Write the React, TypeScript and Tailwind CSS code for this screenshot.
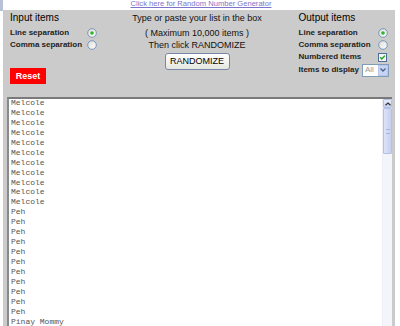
import React from "react";

const melcole = Array.from({ length: 11 }, () => "Melcole");
const peh = Array.from({ length: 11 }, () => "Peh");
const lines = [...melcole, ...peh, "Pinay Mommy"];

function Radio({ checked }: { checked?: boolean }) {
  return (
    <svg width="10" height="10" viewBox="0 0 10 10" className="block shrink-0">
      <defs>
        <linearGradient id={checked ? "rg1" : "rg0"} x1="0" y1="0" x2="1" y2="1">
          <stop offset="0" stopColor="#dcdcd6" />
          <stop offset="1" stopColor="#ffffff" />
        </linearGradient>
      </defs>
      <circle cx="5" cy="5" r="4.3" fill={`url(#${checked ? "rg1" : "rg0"})`} stroke="#6d8fb7" strokeWidth="0.9" />
      {checked && <circle cx="5" cy="5" r="1.8" fill="#2fb52f" />}
    </svg>
  );
}

function Check() {
  return (
    <svg width="9" height="9" viewBox="0 0 9 9" className="block shrink-0">
      <rect x="0.5" y="0.5" width="8" height="8" fill="#f4f4f0" stroke="#4f6f9a" strokeWidth="1" />
      <path d="M2.2 4.3 L3.8 6 L6.9 2.6" fill="none" stroke="#21a121" strokeWidth="1.4" />
    </svg>
  );
}

const label = "text-[8px] font-bold leading-[12px] text-[#222] whitespace-nowrap";

export default function App() {
  return (
    <div
      className="relative w-[400px] h-[326px] overflow-hidden bg-white"
      style={{ fontFamily: '"Liberation Sans", Arial, sans-serif' }}
    >
      {/* top link row */}
      <div className="relative h-[10px] flex justify-center">
        <div className="absolute left-0 top-0 w-[3px] h-[11px] bg-[#b9c1d6]" />
        <span className="block text-[7.6px] leading-[10px] -mt-[1px] ml-[2px] text-[#7b74c9] underline whitespace-nowrap">
          Click here for Random Number Generator
        </span>
      </div>

      {/* gray panel */}
      <div className="ml-[3px] w-[392px] h-[316px] bg-[#cbcbcb] flex flex-col">
        <div className="h-[87px] flex text-black">
          {/* left column */}
          <div className="w-[95px] pl-[7px] pt-[2px] flex flex-col">
            <div className="text-[10px] leading-[12px] h-[15px]">Input items</div>
            <div className="flex items-center justify-between h-[12px] pr-[1px]">
              <span className={label}>Line separation</span>
              <Radio checked />
            </div>
            <div className="flex items-center justify-between h-[12px] pr-[1px]">
              <span className={label}>Comma separation</span>
              <Radio />
            </div>
            <div className="mt-[17px] w-[36px] h-[16px] bg-[#ff0000] flex items-center justify-center">
              <span className="text-[9px] font-bold text-white leading-none">Reset</span>
            </div>
          </div>

          {/* center column */}
          <div className="w-[200px] pt-[2px] flex flex-col items-center text-[9px] text-[#111]">
            <div className="leading-[12px] h-[15px] whitespace-nowrap">Type or paste your list in the box</div>
            <div className="leading-[12px] h-[12px] whitespace-nowrap">( Maximum 10,000 items )</div>
            <div className="leading-[12px] h-[12px] whitespace-nowrap">Then click RANDOMIZE</div>
            <div className="mt-[2px] w-[65px] h-[17px] rounded-[3px] border border-[#7a86a8] bg-gradient-to-b from-white to-[#e6e6e0] flex items-center justify-center text-[9px] leading-none text-black">
              RANDOMIZE
            </div>
          </div>

          {/* right column */}
          <div className="flex-1 pl-[2px] pt-[2px] flex flex-col">
            <div className="text-[10px] leading-[12px] h-[15px] whitespace-nowrap">Output items</div>
            <div className="flex items-center justify-between h-[12px] pr-[7px]">
              <span className={label}>Line separation</span>
              <Radio checked />
            </div>
            <div className="flex items-center justify-between h-[12px] pr-[7px]">
              <span className={label}>Comma separation</span>
              <Radio />
            </div>
            <div className="flex items-center justify-between h-[12px] pr-[8px]">
              <span className={label}>Numbered items</span>
              <Check />
            </div>
            <div className="flex items-center h-[14px] pr-[6px]">
              <span className={label}>Items to display</span>
              <div className="ml-[3px] w-[27px] h-[13px] shrink-0 bg-white border border-[#7f9db9] flex items-center">
                <span className="flex-1 pl-[2px] text-[8px] leading-none text-[#999]">All</span>
                <div className="w-[10px] h-[11px] bg-[#c7d3f2] border border-[#b7c6ee] flex items-center justify-center">
                  <svg width="6" height="4" viewBox="0 0 6 4">
                    <path d="M0.5 0.5 L3 3 L5.5 0.5" fill="none" stroke="#4d6185" strokeWidth="1.3" />
                  </svg>
                </div>
              </div>
            </div>
          </div>
        </div>

        {/* textarea */}
        <div className="ml-[4px] w-[385px] flex-1 bg-white border-t-2 border-l-2 border-t-[#7a7a7a] border-l-[#8a8a8a] flex overflow-hidden">
          <div
            className="flex-1 pl-[2px] -mt-[1px] text-[8px] text-[#555]"
            style={{ fontFamily: '"Liberation Mono", "Courier New", monospace' }}
          >
            {lines.map((l, i) => (
              <div key={i} className="h-[9.95px] leading-[10px] whitespace-pre">
                {l}
              </div>
            ))}
          </div>
          <div className="w-[10px] bg-[#f4f4fb] border-l border-[#eeeef6] flex flex-col">
            <div className="h-[9px] bg-gradient-to-b from-[#e8ecfb] to-[#c8d2f0] border border-[#b4c0e4] rounded-[1px] flex items-center justify-center">
              <svg width="6" height="4" viewBox="0 0 6 4">
                <path d="M0.5 3.3 L3 1 L5.5 3.3" fill="none" stroke="#333" strokeWidth="1.2" />
              </svg>
            </div>
            <div className="h-[46px] bg-gradient-to-r from-[#dde3f8] to-[#c7d0f0] border border-[#b4c0e4] rounded-[1px] flex items-center justify-center">
              <div className="w-[4px] h-[5px] border-y border-[#a8b4dc]" />
            </div>
          </div>
        </div>
      </div>
    </div>
  );
}
